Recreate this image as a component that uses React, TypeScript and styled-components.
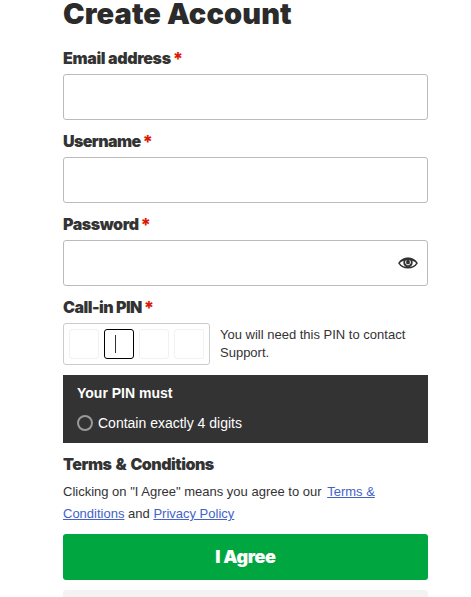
import React from "react";
import styled, { createGlobalStyle } from "styled-components";

const Global = createGlobalStyle`
  * { box-sizing: border-box; }
  html, body { margin: 0; background: #fff; }
  body {
    font-family: "Liberation Sans", Arial, sans-serif;
    color: #333;
    overflow: hidden;
  }
`;

const display = `"Inter", "Open Sans", sans-serif`;

const Form = styled.form`
  width: 365px;
  height: 597px;
  margin-left: 63px;
  overflow: hidden;
`;

const Title = styled.h1<{ $tracking: number }>`
  margin: 0;
  height: 37px;
  font: 900 29px/27px ${display};
  letter-spacing: ${(p) => p.$tracking}px;
  white-space: nowrap;
  color: #2b2b2b;
`;

const Label = styled.label<{ $tracking: number }>`
  display: flex;
  align-items: center;
  height: 37px;
  padding-top: 5px;
  font: 900 16px/20px ${display};
  letter-spacing: ${(p) => p.$tracking}px;
  white-space: nowrap;
`;

const Star = styled.span`
  margin: 2px 0 0 2px;
  font-size: 18px;
  font-weight: 800;
  color: #db1802;
`;

const InputBox = styled.div`
  display: flex;
  align-items: center;
  height: 46px;
  border: 1px solid #bbb;
  border-radius: 3px;
  padding-right: 9px;
`;

const Input = styled.input`
  flex: 1;
  min-width: 0;
  height: 100%;
  border: 0;
  outline: 0;
  background: transparent;
  font: inherit;
`;

const PinRow = styled.div`
  display: flex;
  gap: 10px;
  margin-bottom: 10px;
`;

const PinBox = styled.div`
  display: flex;
  align-items: center;
  gap: 5px;
  width: 147px;
  height: 42px;
  padding-left: 5px;
  border: 1px solid #ccc;
  border-radius: 3px;
`;

const PinCell = styled.div<{ $active?: boolean }>`
  display: flex;
  align-items: center;
  width: 30px;
  height: 30px;
  padding-left: 10px;
  border: 1px solid ${(p) => (p.$active ? "#000" : "#f1f1f1")};
  border-radius: 3px;
`;

const Caret = styled.span`
  width: 1px;
  height: 18px;
  background: #333;
`;

const PinHelp = styled.p`
  flex: 1;
  margin: 3px 0 0;
  font-size: 13px;
  line-height: 18px;
`;

const Rules = styled.section`
  height: 68px;
  padding: 8px 14px;
  background: #333;
  color: #fff;
  font-size: 14px;
  line-height: 20px;
`;

const RulesTitle = styled.div`
  font-weight: 700;
  margin-bottom: 10px;
`;

const Rule = styled.div`
  display: flex;
  align-items: center;
  gap: 5px;
`;

const Ring = styled.span`
  width: 16px;
  height: 16px;
  border: 2px solid #999;
  border-radius: 50%;
`;

const TermsTitle = styled.h2`
  margin: 11px 0 6px;
  font: 900 16px/21px ${display};
  letter-spacing: -0.5px;
  word-spacing: 1.5px;
  white-space: nowrap;
`;

const TermsText = styled.p`
  margin: 0 0 9px;
  font-size: 13px;
  line-height: 22px;
`;

const Link = styled.a<{ $gap?: boolean }>`
  margin-left: ${(p) => (p.$gap ? "2px" : "0")};
  color: #4362c9;
  text-decoration: underline;
`;

const Agree = styled.button`
  display: block;
  width: 100%;
  height: 46px;
  padding: 0;
  border: 0;
  border-radius: 3px;
  background: #00a63f;
  color: #fff;
  font: 900 18px/46px ${display};
  letter-spacing: -0.4px;
`;

const Decline = styled.button`
  display: block;
  width: 100%;
  height: 46px;
  margin-top: 10px;
  border: 0;
  border-radius: 3px;
  background: #f3f3f3;
`;

const Eye = () => (
  <svg width="20" height="12" viewBox="0 0 20 12" aria-label="Show password">
    <path d="M1 6.2C4.8-.1 15.2-.1 19 6.2C15.2 12.4 4.8 12.4 1 6.2Z" fill="#fff" stroke="#333" strokeWidth="1.5" />
    <path d="M.6 6.2C4.8-1.3 15.2-1.3 19.4 6.2C15.5 2.6 4.5 2.6 .6 6.2Z" fill="#333" />
    <circle cx="10" cy="5.8" r="4.7" fill="#333" />
    <path d="M8.2 3.4C7 5.2 7.6 7.9 10 7.9C12.4 7.9 13 5.2 11.8 3.4" fill="none" stroke="#fff" strokeWidth="1" />
  </svg>
);

type FieldProps = { label: string; tracking: number; type?: string; children?: React.ReactNode };

const Field = ({ label, tracking, type = "text", children }: FieldProps) => (
  <div>
    <Label $tracking={tracking}>
      {label}
      <Star>*</Star>
    </Label>
    <InputBox>
      <Input type={type} aria-label={label} />
      {children}
    </InputBox>
  </div>
);

export default function App() {
  return (
    <>
      <Global />
      <Form>
        <Title $tracking={0.1}>Create Account</Title>
        <Field label="Email address" tracking={-0.35} />
        <Field label="Username" tracking={-0.6} />
        <Field label="Password" tracking={-0.45} type="password">
          <Eye />
        </Field>
        <Label $tracking={-0.5}>
          Call-in PIN
          <Star>*</Star>
        </Label>
        <PinRow>
          <PinBox>
            <PinCell />
            <PinCell $active>
              <Caret />
            </PinCell>
            <PinCell />
            <PinCell />
          </PinBox>
          <PinHelp>You will need this PIN to contact Support.</PinHelp>
        </PinRow>
        <Rules>
          <RulesTitle>Your PIN must</RulesTitle>
          <Rule>
            <Ring />
            Contain exactly 4 digits
          </Rule>
        </Rules>
        <TermsTitle>Terms &amp; Conditions</TermsTitle>
        <TermsText>
          Clicking on "I Agree" means you agree to our <Link $gap>Terms &amp; Conditions</Link> and{" "}
          <Link>Privacy Policy</Link>
        </TermsText>
        <Agree type="button">I Agree</Agree>
        <Decline type="button" aria-label="Cancel" />
      </Form>
    </>
  );
}
